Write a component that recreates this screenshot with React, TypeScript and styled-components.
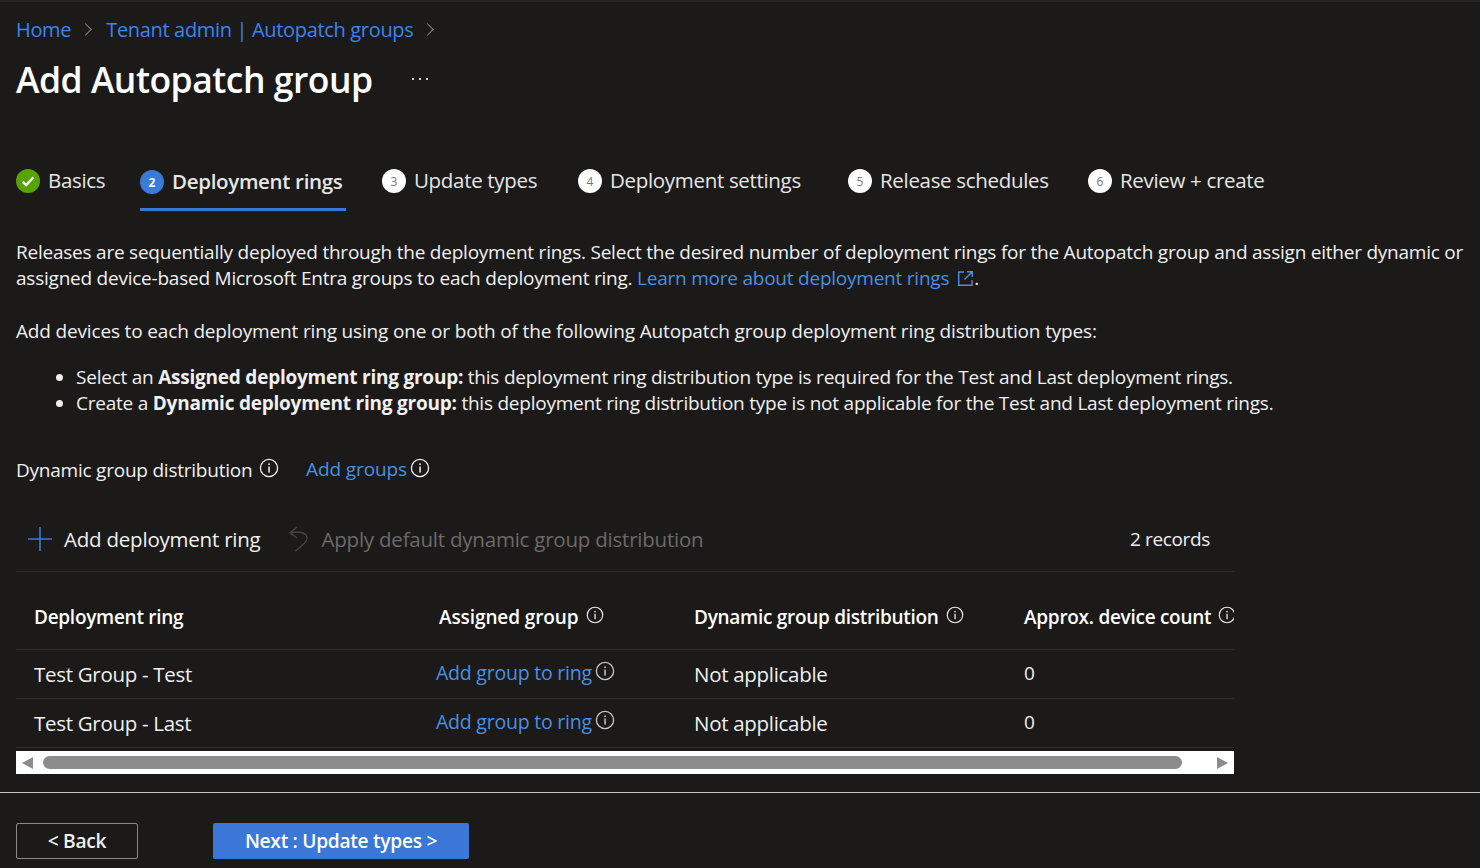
import React from 'react';
import styled, { createGlobalStyle } from 'styled-components';

const GlobalStyle = createGlobalStyle`
    html, body {
        margin: 0;
        padding: 0;
        background: #1b1a19;
    }
    body {
        font-family: 'Open Sans', 'Noto Sans', sans-serif;
        color: #f0f0f0;
    }
    * {
        box-sizing: border-box;
    }
`;

const steps = [
    { n: '3', label: 'Update types' },
    { n: '4', label: 'Deployment settings' },
    { n: '5', label: 'Release schedules' },
    { n: '6', label: 'Review + create' },
];

const rings = ['Test Group - Test', 'Test Group - Last'];

const InfoIcon: React.FC<{ size?: number; className?: string }> = ({ size = 20, className }) => (
    <svg className={className} width={size} height={size} viewBox="0 0 20 20" fill="none">
        <circle cx="10" cy="10" r="8.6" stroke="currentColor" strokeWidth="1.3" />
        <rect x="9.3" y="8.6" width="1.5" height="6" fill="currentColor" />
        <rect x="9.3" y="5.4" width="1.5" height="1.7" fill="currentColor" />
    </svg>
);

export default function App() {
    return (
        <Page>
            <GlobalStyle />
            <TopStrip />
            <Breadcrumb>
                <Crumb>Home</Crumb>
                <Chevron />
                <Crumb>Tenant admin | Autopatch groups</Crumb>
                <Chevron />
            </Breadcrumb>
            <TitleRow>
                <Title>Add Autopatch group</Title>
                <MoreDots>
                    <i />
                    <i />
                    <i />
                </MoreDots>
            </TitleRow>

            <Tabs>
                <Tab>
                    <DoneCircle>
                        <svg width="16" height="16" viewBox="0 0 16 16" fill="none">
                            <path d="M2.6 8.6 L6.2 12 L13.4 4.4" stroke="#fff" strokeWidth="2.4" />
                        </svg>
                    </DoneCircle>
                    <TabLabel>Basics</TabLabel>
                </Tab>
                <ActiveTab>
                    <ActiveCircle>2</ActiveCircle>
                    <ActiveLabel>Deployment rings</ActiveLabel>
                </ActiveTab>
                {steps.map((s) => (
                    <Tab key={s.n}>
                        <StepCircle>{s.n}</StepCircle>
                        <TabLabel>{s.label}</TabLabel>
                    </Tab>
                ))}
            </Tabs>

            <Body>
                <Paragraph>
                    Releases are sequentially deployed through the deployment rings. Select the desired number of
                    deployment rings for the Autopatch group and assign either dynamic or
                    <br />
                    assigned device-based Microsoft Entra groups to each deployment ring.{' '}
                    <Link>Learn more about deployment rings</Link>
                    <ExternalIcon width="17" height="17" viewBox="0 0 17 17" fill="none">
                        <path
                            d="M7 2 H1.7 V15.3 H15 V10 M10 1.7 H15.3 V7 M15.3 1.7 L7.5 9.5"
                            stroke="#4a90e2"
                            strokeWidth="1.4"
                        />
                    </ExternalIcon>
                    .
                </Paragraph>
                <Lead>
                    Add devices to each deployment ring using one or both of the following Autopatch group deployment
                    ring distribution types:
                </Lead>
                <Bullets>
                    <li>
                        Select an <b>Assigned deployment ring group:</b> this deployment ring distribution type is
                        required for the Test and Last deployment rings.
                    </li>
                    <li>
                        Create a <b>Dynamic deployment ring group:</b> this deployment ring distribution type is not
                        applicable for the Test and Last deployment rings.
                    </li>
                </Bullets>
            </Body>

            <DistributionRow>
                <DistributionLabel>
                    Dynamic group distribution
                    <LabelInfo />
                </DistributionLabel>
                <AddGroups>
                    <Link>Add groups</Link>
                    <AddInfo />
                </AddGroups>
            </DistributionRow>

            <TableArea>
                <Toolbar>
                    <ToolButton>
                        <svg width="26" height="26" viewBox="0 0 26 26" fill="none">
                            <path d="M13 1 V25 M1 13 H25" stroke="#3a77d6" strokeWidth="1.6" />
                        </svg>
                        Add deployment ring
                    </ToolButton>
                    <DisabledButton>
                        <svg width="24" height="28" viewBox="0 0 24 28" fill="none">
                            <path
                                d="M10 2 L3 8 L10 13 M3 8 C9 6.5 20 6.5 20 13 C20 17 14 22 8 26"
                                stroke="#474645"
                                strokeWidth="1.3"
                            />
                        </svg>
                        Apply default dynamic group distribution
                    </DisabledButton>
                    <Records>2 records</Records>
                </Toolbar>

                <HeaderRow>
                    <HeadCell>Deployment ring</HeadCell>
                    <AssignedHead>
                        Assigned group
                        <HeadInfo />
                    </AssignedHead>
                    <HeadCell>
                        Dynamic group distribution
                        <HeadInfo />
                    </HeadCell>
                    <HeadCell>
                        Approx. device count
                        <HeadInfo />
                    </HeadCell>
                </HeaderRow>
                {rings.map((ring) => (
                    <BodyRow key={ring}>
                        <Cell>{ring}</Cell>
                        <LinkCell>
                            <Link>Add group to ring</Link>
                            <CellInfo />
                        </LinkCell>
                        <Cell>Not applicable</Cell>
                        <CountCell>0</CountCell>
                    </BodyRow>
                ))}

                <Scrollbar>
                    <ArrowLeft />
                    <Thumb />
                    <ArrowRight />
                </Scrollbar>
            </TableArea>

            <Footer>
                <BackButton>&lt; Back</BackButton>
                <NextButton>Next : Update types &gt;</NextButton>
            </Footer>
        </Page>
    );
}

const Page = styled.div`
    width: 1480px;
    height: 868px;
    overflow: hidden;
    background: #1b1a19;
    font-size: 19px;
    letter-spacing: -0.23px;
`;

const TopStrip = styled.div`
    height: 2px;
    background: #252423;
`;

const Breadcrumb = styled.div`
    height: 28px;
    margin: 13px 0 0 16px;
    display: flex;
    align-items: center;
    gap: 12px;
`;

const Crumb = styled.span`
    color: #3b83f0;
    font-size: 20px;
    letter-spacing: -0.33px;
`;

const Chevron = styled.span`
    width: 9px;
    height: 9px;
    margin: 0 4px 0 -2px;
    border-top: 1px solid #8a8886;
    border-right: 1px solid #8a8886;
    transform: rotate(45deg);
`;

const TitleRow = styled.div`
    height: 50px;
    margin: 11px 0 0 16px;
    display: flex;
    align-items: center;
`;

const Title = styled.h1`
    margin: 0;
    font-size: 35.5px;
    font-weight: 600;
    color: #fff;
    letter-spacing: -0.5px;
`;

const MoreDots = styled.div`
    margin-left: 39px;
    display: flex;
    gap: 5px;

    i {
        width: 2px;
        height: 2px;
        background: #d6d6d6;
    }
`;

const Tabs = styled.div`
    height: 53px;
    margin: 54px 0 0 16px;
    display: grid;
    grid-template-columns: 124px 242px 196px 270px 240px auto;
    font-size: 20.5px;
    letter-spacing: -0.32px;
`;

const Tab = styled.div`
    display: flex;
    align-items: center;
    gap: 8px;
    height: 46px;
`;

const ActiveTab = styled(Tab)`
    height: 53px;
    width: 206px;
    padding-bottom: 2px;
    border-bottom: 3px solid #3a77d6;
`;

const TabLabel = styled.span`
    color: #e6e6e6;
    padding-bottom: 2px;
`;

const ActiveLabel = styled(TabLabel)`
    font-weight: 600;
`;

const Circle = styled.span`
    width: 24px;
    height: 24px;
    border-radius: 50%;
    flex: none;
    display: flex;
    align-items: center;
    justify-content: center;
    font-size: 12px;
    letter-spacing: 0;
`;

const DoneCircle = styled(Circle)`
    background: #57a300;
`;

const ActiveCircle = styled(Circle)`
    background: #3a7bd5;
    color: #fff;
    font-weight: 700;
`;

const StepCircle = styled(Circle)`
    background: #fff;
    color: #777;
`;

const Body = styled.div`
    margin: 28px 16px 0;
    line-height: 26px;
    color: #f0f0f0;
    white-space: nowrap;
`;

const Paragraph = styled.p`
    margin: 0;
`;

const Lead = styled.p`
    margin: 27px 0 0;
    letter-spacing: -0.16px;
`;

const Bullets = styled.ul`
    margin: 20px 0 0;
    padding: 0 0 0 60px;

    b {
        font-weight: 700;
    }
`;

const Link = styled.span`
    color: #4a90e2;
`;

const ExternalIcon = styled.svg`
    margin-left: 8px;
    vertical-align: -2px;
`;

const DistributionRow = styled.div`
    height: 28px;
    margin: 40px 0 0 16px;
    display: flex;
    align-items: center;
`;

const DistributionLabel = styled.div`
    display: flex;
    align-items: center;
    width: 290px;
`;

const LabelInfo = styled(InfoIcon)`
    margin: -5px 0 0 7px;
    color: #f0f0f0;
`;

const AddGroups = styled.div`
    display: flex;
    align-items: center;
    margin-top: -2px;
    letter-spacing: -0.1px;
`;

const AddInfo = styled(InfoIcon)`
    margin: -2px 0 0 3px;
    color: #f0f0f0;
`;

const TableArea = styled.div`
    width: 1218px;
    margin: 23px 0 0 16px;
`;

const Toolbar = styled.div`
    height: 65px;
    display: flex;
    align-items: center;
    border-bottom: 1px solid #2e2d2c;
`;

const ToolButton = styled.div`
    display: flex;
    align-items: center;
    gap: 11px;
    padding-left: 11px;
    color: #f0f0f0;
    font-size: 20.5px;
    letter-spacing: -0.22px;
`;

const DisabledButton = styled(ToolButton)`
    padding-left: 0;
    margin-left: 26px;
    color: #6b6a69;
`;

const Records = styled.div`
    margin-left: auto;
    margin-right: 24px;
    color: #f0f0f0;
    letter-spacing: -0.35px;
`;

const columns = '401px 259px 330px 228px';

const HeaderRow = styled.div`
    height: 78px;
    padding: 12px 0 0 18px;
    display: grid;
    grid-template-columns: ${columns};
    align-items: center;
    border-bottom: 1px solid #2e2d2c;
    overflow: hidden;
`;

const HeadCell = styled.div`
    display: flex;
    align-items: center;
    font-size: 19px;
    font-weight: 600;
    letter-spacing: -0.28px;
    color: #fff;
    white-space: nowrap;
`;

const AssignedHead = styled(HeadCell)`
    padding-left: 4px;
    letter-spacing: -0.1px;
`;

const HeadInfo = styled(InfoIcon).attrs({ size: 18 })`
    flex: none;
    margin: -4px 0 0 7px;
    color: #e6e6e6;
`;

const BodyRow = styled.div`
    height: 49px;
    padding-left: 18px;
    display: grid;
    grid-template-columns: ${columns};
    align-items: center;
    border-bottom: 1px solid #2e2d2c;
`;

const Cell = styled.div`
    color: #f0f0f0;
    padding-bottom: 1px;
    white-space: nowrap;
    font-size: 20.5px;
    letter-spacing: -0.3px;
`;

const LinkCell = styled.div`
    display: flex;
    align-items: center;
    margin: -3px 0 0 1px;
    font-size: 19.5px;
`;

const CellInfo = styled(InfoIcon)`
    margin: -3px 0 0 3px;
    color: #c8c8c8;
`;

const CountCell = styled(Cell)`
    padding-bottom: 0;
    margin-top: -2px;
    font-size: 19px;
`;

const Scrollbar = styled.div`
    height: 23px;
    margin-top: 3px;
    background: #fff;
    display: flex;
    align-items: center;
    padding: 0 6px;
`;

const ArrowLeft = styled.span`
    width: 0;
    height: 0;
    border-top: 6.5px solid transparent;
    border-bottom: 6.5px solid transparent;
    border-right: 11px solid #8c8c8c;
`;

const Thumb = styled.span`
    width: 1139px;
    height: 13px;
    margin-left: 10px;
    border-radius: 7px;
    background: #8c8c8c;
`;

const ArrowRight = styled.span`
    margin-left: auto;
    width: 0;
    height: 0;
    border-top: 6.5px solid transparent;
    border-bottom: 6.5px solid transparent;
    border-left: 11px solid #8c8c8c;
`;

const Footer = styled.div`
    margin-top: 18px;
    height: 68px;
    border-top: 1px solid #c8c6c4;
    padding: 30px 0 0 16px;
    display: flex;
    align-items: flex-start;
`;

const BackButton = styled.button`
    width: 122px;
    height: 36px;
    padding: 0 0 2px;
    background: transparent;
    border: 1px solid #8a8886;
    border-radius: 2px;
    color: #f0f0f0;
    font-family: inherit;
    font-size: 19.2px;
    font-weight: 600;
    letter-spacing: -0.3px;
`;

const NextButton = styled(BackButton)`
    width: 256px;
    margin-left: 75px;
    background: #3a77d6;
    border: none;
    color: #fff;
`;
